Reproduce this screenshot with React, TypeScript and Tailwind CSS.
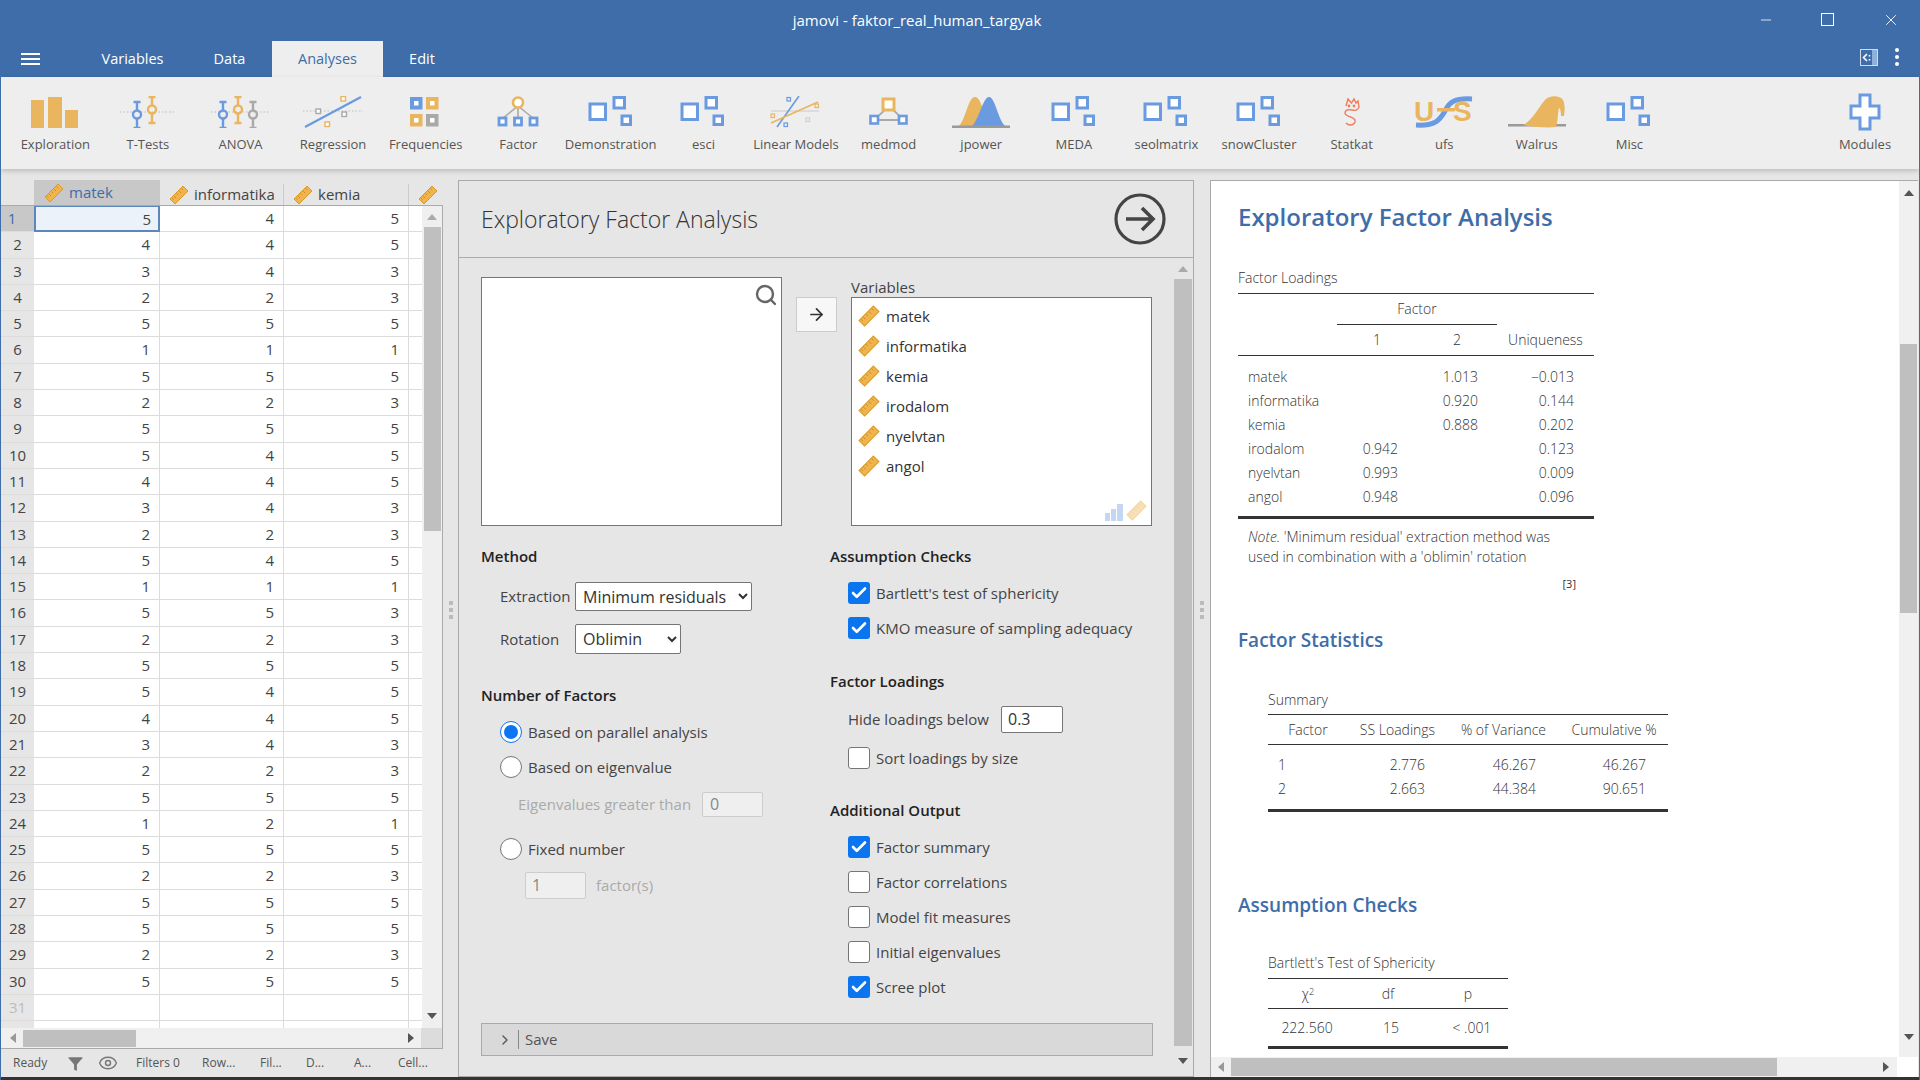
import React from "react";
import { Search, Check, ArrowRight, ChevronRight, Eye, Filter, Minus, X } from "lucide-react";

const BLUE = "#6a9ae0";
const ORANGE = "#e9b55f";
const GRAY = "#a9a9a9";

const rows = [
  [5, 4, 5], [4, 4, 5], [3, 4, 3], [2, 2, 3], [5, 5, 5], [1, 1, 1], [5, 5, 5], [2, 2, 3], [5, 5, 5], [5, 4, 5],
  [4, 4, 5], [3, 4, 3], [2, 2, 3], [5, 4, 5], [1, 1, 1], [5, 5, 3], [2, 2, 3], [5, 5, 5], [5, 4, 5], [4, 4, 5],
  [3, 4, 3], [2, 2, 3], [5, 5, 5], [1, 2, 1], [5, 5, 5], [2, 2, 3], [5, 5, 5], [5, 5, 5], [2, 2, 3], [5, 5, 5],
];

const Ruler = ({ size = 20, faded = false }: { size?: number; faded?: boolean }) => (
  <svg width={size} height={size} viewBox="0 0 20 20" className={faded ? "shrink-0 opacity-40" : "shrink-0"}>
    <polygon points="14,1 19,6 6,19 1,14" fill="#efb44c" stroke="#dc9a2a" strokeWidth="1" />
    <path d="M12.5 3.5l1.5 1.5M10 6l2 2M7.5 8.5l1.5 1.5M5 11l2 2M3 13l1.5 1.5" stroke="#c98a22" strokeWidth="0.9" />
  </svg>
);

// whisker mark used by T-Tests and ANOVA
const Whisker = ({ x, y, color }: { x: number; y: number; color: string }) => (
  <g stroke={color} strokeWidth="2.4" fill="none">
    <path d={`M${x - 3.5} ${y}h7M${x - 3.5} ${y + 26}h7M${x} ${y}v8M${x} ${y + 17}v9`} />
    <circle cx={x} cy={y + 12.5} r="4" />
  </g>
);

const Dots = ({ y, x1, x2 }: { y: number; x1: number; x2: number }) => (
  <path d={`M${x1} ${y}H${x2}`} stroke="#bdbdbd" strokeWidth="1" strokeDasharray="1.5 2" />
);

const Sq = ({ x, y, s, color, w = 2.6, fill = "#fff" }: { x: number; y: number; s: number; color: string; w?: number; fill?: string }) => (
  <rect x={x} y={y} width={s} height={s} fill={fill} stroke={color} strokeWidth={w} />
);

const ModuleIcon = () => (
  <svg width="46" height="32" viewBox="0 0 46 32">
    <Sq x={2} y={8} s={15.5} color={BLUE} w={3} />
    <Sq x={26} y={1.5} s={10.5} color={BLUE} w={3} />
    <Sq x={34} y={20} s={8.5} color={BLUE} w={3} />
  </svg>
);

const icons: Record<string, React.ReactNode> = {
  Exploration: (
    <svg width="48" height="32" viewBox="0 0 48 32">
      <rect x="0" y="4" width="13" height="28" fill={ORANGE} />
      <rect x="17" y="1" width="14" height="31" fill={ORANGE} />
      <rect x="34" y="14" width="13" height="18" fill={ORANGE} />
    </svg>
  ),
  "T-Tests": (
    <svg width="56" height="32" viewBox="0 0 56 32">
      <Dots y={16} x1={0} x2={56} />
      <Whisker x={17} y={6} color={BLUE} />
      <Whisker x={32} y={1} color={ORANGE} />
    </svg>
  ),
  ANOVA: (
    <svg width="58" height="32" viewBox="0 0 58 32">
      <Dots y={16} x1={0} x2={58} />
      <Whisker x={12} y={6} color={BLUE} />
      <Whisker x={27} y={1} color={ORANGE} />
      <Whisker x={42} y={6} color={GRAY} />
    </svg>
  ),
  Regression: (
    <svg width="60" height="32" viewBox="0 0 60 32">
      <Dots y={15} x1={0} x2={60} />
      <path d="M2 31L58 1" stroke={BLUE} strokeWidth="2.2" />
      <Sq x={38} y={0.5} s={4.5} color={ORANGE} w={1.4} />
      <Sq x={13} y={13} s={4.5} color={GRAY} w={1.4} />
      <Sq x={39} y={16} s={4.5} color={GRAY} w={1.4} />
      <Sq x={22} y={26} s={4.5} color={ORANGE} w={1.4} />
    </svg>
  ),
  Frequencies: (
    <svg width="32" height="32" viewBox="0 0 32 32">
      <Sq x={2} y={3} s={8.5} color={BLUE} w={4} />
      <Sq x={18} y={3} s={8.5} color={ORANGE} w={4} />
      <Sq x={2} y={20} s={8.5} color={ORANGE} w={4} />
      <Sq x={18} y={20} s={8.5} color={GRAY} w={4} />
    </svg>
  ),
  Factor: (
    <svg width="42" height="32" viewBox="0 0 42 32">
      <path d="M21 10L6 22M21 10V22M21 10L36 22" stroke={GRAY} strokeWidth="1.6" />
      <circle cx="21" cy="6.5" r="5" fill="#fff" stroke={ORANGE} strokeWidth="2.6" />
      <Sq x={2} y={22} s={7} color={BLUE} w={2.8} />
      <Sq x={17.5} y={22} s={7} color={BLUE} w={2.8} />
      <Sq x={33} y={22} s={7} color={BLUE} w={2.8} />
    </svg>
  ),
  "Linear Models": (
    <svg width="56" height="32" viewBox="0 0 56 32">
      <rect x="3" y="14" width="48" height="2" fill="#dcdcdc" />
      <Sq x={19} y={1.5} s={3.5} color={BLUE} w={1.2} fill="none" />
      <Sq x={38} y={22} s={3.5} color="#cfcfcf" w={1.2} fill="none" />
      <Sq x={3} y={18} s={3.5} color={ORANGE} w={1.2} fill="none" />
      <Sq x={16} y={27} s={3.5} color={BLUE} w={1.2} fill="none" />
      <Sq x={47} y={8} s={3.5} color={ORANGE} w={1.2} fill="none" />
      <path d="M9 31L31 0" stroke={BLUE} strokeWidth="1.6" />
      <path d="M3 27L50 6" stroke={ORANGE} strokeWidth="1.6" />
    </svg>
  ),
  medmod: (
    <svg width="42" height="32" viewBox="0 0 42 32">
      <path d="M21 10L6 24H36Z" fill="none" stroke={GRAY} strokeWidth="1.8" />
      <Sq x={15} y={3} s={11} color={ORANGE} w={3} />
      <Sq x={2.5} y={20} s={7.5} color={BLUE} w={2.6} />
      <Sq x={31} y={20} s={7.5} color={BLUE} w={2.6} />
    </svg>
  ),
  jpower: (
    <svg width="58" height="32" viewBox="0 0 58 32">
      <path d="M4 31C13 31 15 1 23 1C31 1 33 31 42 31Z" fill={ORANGE} />
      <path d="M17 31C26 31 30 1 37 1C44 1 47 31 56 31Z" fill={BLUE} />
      <rect x="0" y="29.5" width="58" height="2.5" fill="#9a9a9a" />
    </svg>
  ),
  Statkat: (
    <svg width="26" height="32" viewBox="0 0 26 32" fill="none" stroke="#ef7d5e" strokeWidth="1.4">
      <path d="M7 10L9 3l3.5 4L15 3l2 4 2-2 1 6c-1 3-4 4-7 3-4-1-7 0-7 3 0 4 8 3 10 7 1 3-2 5-5 5-2 0-3-1-4-2" />
      <circle cx="10" cy="10" r="0.7" fill="#ef7d5e" />
      <circle cx="15" cy="10" r="0.7" fill="#ef7d5e" />
    </svg>
  ),
  ufs: (
    <svg width="58" height="36" viewBox="0 0 58 36">
      <text x="-1" y="27" fontFamily="Liberation Sans, sans-serif" fontWeight="700" fontSize="28" fill={ORANGE}>U</text>
      <text x="38" y="27" fontFamily="Liberation Sans, sans-serif" fontWeight="700" fontSize="28" fill={ORANGE}>S</text>
      <path d="M1 31C18 32 24 28 30 17C34 8 40 4 57 5" stroke={BLUE} strokeWidth="5" fill="none" />
      <rect x="22" y="14" width="18" height="3.5" fill={ORANGE} />
    </svg>
  ),
  Walrus: (
    <svg width="58" height="32" viewBox="0 0 58 32">
      <rect x="0" y="28" width="58" height="2.5" fill="#9a9a9a" />
      <path d="M15 29C24 25 30 12 37 4C41 -1 52 -1 55 4C57 8 57 14 56 20L53 20C53 15 52 12 51 12C50 14 50 26 48 31C40 32 25 31 15 29Z" fill={ORANGE} />
    </svg>
  ),
  Modules: (
    <svg width="32" height="38" viewBox="0 0 32 38">
      <path d="M11 2H21V13H30V25H21V36H11V25H2V13H11Z" fill="#fff" stroke={BLUE} strokeWidth="3" />
    </svg>
  ),
};

const ribbon = [
  "Exploration", "T-Tests", "ANOVA", "Regression", "Frequencies", "Factor", "Demonstration:", "esci", "Linear Models",
  "medmod", "jpower", "MEDA", "seolmatrix", "snowCluster", "Statkat", "ufs", "Walrus", "Misc",
];

const RibbonItem = ({ label }: { label: string }) => (
  <div className="flex w-[92.6px] shrink-0 flex-col items-center">
    <div className="flex h-[32px] items-center justify-center">{icons[label] ?? <ModuleIcon />}</div>
    <div className="mt-[6px] h-[20px] w-[92px] overflow-hidden whitespace-nowrap text-center text-[13px] leading-[20px] text-[#555]">{label}</div>
  </div>
);

const Tri = ({ dir, color = "#555" }: { dir: "up" | "down" | "left" | "right"; color?: string }) => {
  const pts = { up: "0,7 5,1 10,7", down: "0,1 10,1 5,7", left: "7,0 7,10 1,5", right: "1,0 1,10 7,5" }[dir];
  return (
    <svg width={dir === "up" || dir === "down" ? 10 : 8} height={dir === "up" || dir === "down" ? 8 : 10} className="shrink-0">
      <polygon points={pts} fill={color} />
    </svg>
  );
};

const DataGrid = () => (
  <div className="flex w-[442px] flex-col bg-[#e6e6e6]">
    <div className="flex h-[25px] items-end text-[15px] text-[#444]">
      <div className="w-[33px]" />
      <div className="flex h-[25px] w-[126px] items-center gap-[5px] bg-[#c8c8c8] pl-[10px] text-[#3e6da9]"><Ruler />matek</div>
      <div className="flex h-[21px] w-[124px] items-center gap-[5px] border-r border-[#ccc] pl-[9px]"><Ruler />informatika</div>
      <div className="flex h-[21px] w-[125px] items-center gap-[5px] border-r border-[#ccc] pl-[9px]"><Ruler />kemia</div>
      <div className="flex h-[21px] items-center pl-[9px]"><Ruler /></div>
    </div>
    <div className="flex h-[823px] border-t border-r border-[#aaa]">
      <div className="w-[421px] overflow-hidden bg-white text-[15px] text-[#444]">
        {rows.map((r, i) => (
          <div key={i} className="flex h-[26.3px] border-b border-[#dcdcdc] leading-[25px]">
            <div className={i === 0 ? "w-[33px] bg-[#c8c8c8] pr-[11px] text-center text-[#3e6da9]" : "w-[33px] bg-[#e6e6e6] text-center"}>{i + 1}</div>
            {r.map((v, j) => (
              <div
                key={j}
                className={
                  i === 0 && j === 0
                    ? "-mt-px h-[27.3px] w-[126px] border-2 border-[#5d87bb] bg-[#ecf2fa] pr-[7px] text-right"
                    : "border-r border-[#dcdcdc] pr-[9px] text-right " + (j === 0 ? "w-[126px]" : j === 1 ? "w-[124px]" : "w-[125px]")
                }
              >
                {v}
              </div>
            ))}
          </div>
        ))}
        {[31, 32].map((n) => (
          <div key={n} className="flex h-[26.3px] border-b border-[#dcdcdc] leading-[25px]">
            <div className="w-[33px] bg-[#e6e6e6] text-center text-[#bbb]">{n}</div>
            <div className="w-[126px] border-r border-[#dcdcdc]" />
            <div className="w-[124px] border-r border-[#dcdcdc]" />
            <div className="w-[125px] border-r border-[#dcdcdc]" />
          </div>
        ))}
      </div>
      <div className="flex w-[20px] flex-col items-center bg-[#efefef]">
        <div className="flex h-[21px] items-center"><Tri dir="up" color="#aaa" /></div>
        <div className="h-[304px] w-[17px] bg-[#bfbfbf]" />
        <div className="flex-1" />
        <div className="flex h-[24px] items-center"><Tri dir="down" /></div>
      </div>
    </div>
    <div className="flex h-[21px] border-b border-r border-[#aaa]">
      <div className="flex h-[20px] w-[420px] items-center bg-[#f0f0f0] pl-[8px]">
        <Tri dir="left" color="#999" />
        <div className="ml-[6px] h-[17px] w-[113px] bg-[#bfbfbf]" />
        <div className="flex-1" />
        <div className="mr-[6px]"><Tri dir="right" /></div>
      </div>
      <div className="h-[20px] flex-1 bg-[#dcdcdc]" />
    </div>
    <div className="relative flex h-[28px] items-center text-[12px] text-[#555]">
      <span className="ml-[12px] w-[54px]">Ready</span>
      <Filter size={17} strokeWidth={0} fill="#777" className="w-[17px]" />
      <Eye size={20} strokeWidth={1.7} className="ml-[14px] text-[#777]" />
      <span className="ml-[18px] w-[66px]">Filters 0</span>
      <span className="w-[58px]">Row...</span>
      <span className="w-[46px]">Fil...</span>
      <span className="w-[48px]">D...</span>
      <span className="w-[44px]">A...</span>
      <span>Cell...</span>
    </div>
  </div>
);

const Splitter = ({ w }: { w: number }) => (
  <div className="flex shrink-0 flex-col items-center justify-center gap-[3px] pb-[38px]" style={{ width: w }}>
    <div className="h-[4px] w-[4px] bg-[#bbb]" />
    <div className="h-[4px] w-[4px] bg-[#bbb]" />
    <div className="h-[4px] w-[4px] bg-[#bbb]" />
  </div>
);

const Heading = ({ children, className = "" }: { children: React.ReactNode; className?: string }) => (
  <div className={"h-[24px] text-[15px] font-semibold leading-[24px] text-[#222] " + className}>{children}</div>
);

const CheckRow = ({ on = false, label, className = "" }: { on?: boolean; label: string; className?: string }) => (
  <div className={"ml-[18px] flex h-[22px] items-center text-[15px] text-[#444] " + className}>
    <span
      className={
        on
          ? "flex h-[22px] w-[22px] items-center justify-center rounded-[3px] bg-[#0b75f0]"
          : "h-[22px] w-[22px] rounded-[3px] border border-[#767676] bg-white"
      }
    >
      {on && <Check size={18} strokeWidth={3.5} className="text-white" />}
    </span>
    <span className="ml-[6px] whitespace-nowrap">{label}</span>
  </div>
);

const RadioRow = ({ on = false, label, className = "" }: { on?: boolean; label: string; className?: string }) => (
  <div className={"ml-[19px] flex h-[22px] items-center text-[15px] text-[#444] " + className}>
    <span className={"flex h-[22px] w-[22px] items-center justify-center rounded-full border bg-white " + (on ? "border-[#0b75f0]" : "border-[#767676]")}>
      {on && <span className="h-[14px] w-[14px] rounded-full bg-[#0b75f0]" />}
    </span>
    <span className="ml-[6px]">{label}</span>
  </div>
);

const Options = () => (
  <div className="flex w-[736px] flex-col border border-[#aaa] bg-[#e6e6e6]">
    <div className="flex h-[77px] shrink-0 items-center justify-between border-b border-[#aaa] pl-[22px] pr-[27px]">
      <span className="text-[23px] font-light text-[#333]">Exploratory Factor Analysis</span>
      <svg width="52" height="52" viewBox="0 0 52 52" fill="none" stroke="#444" strokeWidth="3.2">
        <circle cx="26" cy="26" r="24" />
        <path d="M12 26H39M28 15l11 11-11 11" strokeWidth="3.6" />
      </svg>
    </div>
    <div className="flex min-h-0 flex-1">
      <div className="w-[713px] pl-[22px] pt-[19px]">
        <div className="flex">
          <div className="relative h-[249px] w-[301px] border border-[#767676] bg-white">
            <Search size={24} strokeWidth={2.4} className="absolute right-[3px] top-[5px] text-[#666]" />
          </div>
          <button className="ml-[14px] mt-[20px] flex h-[35px] w-[41px] items-center justify-center border border-[#ccc] bg-[#f7f7f7]">
            <ArrowRight size={19} strokeWidth={2.2} className="text-[#333]" />
          </button>
          <div className="ml-[14px] flex w-[301px] flex-col">
            <div className="h-[20px] text-[15px] leading-[20px] text-[#444]">Variables</div>
            <div className="relative h-[229px] border border-[#767676] bg-white pl-[6px] pt-[3px] text-[15px] text-[#333]">
              {["matek", "informatika", "kemia", "irodalom", "nyelvtan", "angol"].map((v) => (
                <div key={v} className="flex h-[30px] items-center gap-[6px]"><Ruler size={22} />{v}</div>
              ))}
              <div className="absolute bottom-[4px] right-[4px] flex items-end gap-[3px]">
                <svg width="18" height="17" viewBox="0 0 18 17" className="opacity-40">
                  <path d="M0 9h5v8H0zM6 5h5v12H6zM12 0h6v17h-6z" fill={BLUE} />
                </svg>
                <Ruler size={21} faded />
              </div>
            </div>
          </div>
        </div>
        <div className="mt-[18px] flex">
          <div className="w-[349px]">
            <Heading>Method</Heading>
            <div className="ml-[19px] mt-[14px] flex h-[29px] items-center text-[15px] text-[#444]">
              <span className="w-[75px]">Extraction</span>
              <select defaultValue="a" className="h-[29px] w-[177px] rounded-[2px] border border-[#767676] bg-white pl-[3px] text-[16px] text-[#333]">
                <option value="a">Minimum residuals</option>
              </select>
            </div>
            <div className="ml-[19px] mt-[13px] flex h-[30px] items-center text-[15px] text-[#444]">
              <span className="w-[75px]">Rotation</span>
              <select defaultValue="a" className="h-[30px] w-[106px] rounded-[2px] border border-[#767676] bg-white pl-[3px] text-[16px] text-[#333]">
                <option value="a">Oblimin</option>
              </select>
            </div>
            <Heading className="mt-[29px]">Number of Factors</Heading>
            <RadioRow on label="Based on parallel analysis" className="mt-[14px]" />
            <RadioRow label="Based on eigenvalue" className="mt-[13px]" />
            <div className="ml-[37px] mt-[14px] flex h-[25px] items-center text-[15px] text-[#aaa]">
              <span className="w-[184px] whitespace-nowrap">Eigenvalues greater than</span>
              <div className="h-[25px] w-[61px] rounded-[2px] border border-[#ccc] bg-[#efefef] pl-[7px] text-[16px] leading-[23px] text-[#888]">0</div>
            </div>
            <RadioRow label="Fixed number" className="mt-[21px]" />
            <div className="ml-[44px] mt-[12px] flex h-[27px] items-center text-[15px] text-[#aaa]">
              <div className="h-[27px] w-[61px] rounded-[2px] border border-[#ccc] bg-[#efefef] pl-[6px] text-[16px] leading-[25px] text-[#888]">1</div>
              <span className="ml-[10px]">factor(s)</span>
            </div>
          </div>
          <div>
            <Heading>Assumption Checks</Heading>
            <CheckRow on label="Bartlett's test of sphericity" className="mt-[14px]" />
            <CheckRow on label="KMO measure of sampling adequacy" className="mt-[13px]" />
            <Heading className="mt-[30px]">Factor Loadings</Heading>
            <div className="ml-[18px] mt-[13px] flex h-[27px] items-center text-[15px] text-[#444]">
              <span className="w-[153px] whitespace-nowrap">Hide loadings below</span>
              <div className="h-[27px] w-[62px] rounded-[2px] border border-[#767676] bg-white pl-[6px] text-[16px] leading-[24px] text-[#333]">0.3</div>
            </div>
            <CheckRow label="Sort loadings by size" className="mt-[14px]" />
            <Heading className="mt-[29px]">Additional Output</Heading>
            <CheckRow on label="Factor summary" className="mt-[14px]" />
            <CheckRow label="Factor correlations" className="mt-[13px]" />
            <CheckRow label="Model fit measures" className="mt-[13px]" />
            <CheckRow label="Initial eigenvalues" className="mt-[13px]" />
            <CheckRow on label="Scree plot" className="mt-[13px]" />
          </div>
        </div>
        <div className="mt-[25px] flex h-[33px] w-[672px] items-center border border-[#aaa] bg-[#d9d9d9] text-[15px] text-[#555]">
          <ChevronRight size={16} strokeWidth={2} className="ml-[15px] text-[#555]" />
          <div className="ml-[5px] mr-[6px] h-[19px] w-px bg-[#888]" />
          Save
        </div>
      </div>
      <div className="flex w-[21px] flex-col items-center">
        <div className="flex h-[21px] items-center"><Tri dir="up" color="#aaa" /></div>
        <div className="h-[767px] w-[18px] bg-[#bfbfbf]" />
        <div className="flex flex-1 items-center"><Tri dir="down" /></div>
      </div>
    </div>
  </div>
);

const H2 = ({ children, className = "" }: { children: React.ReactNode; className?: string }) => (
  <div className={"h-[28px] text-[19px] font-semibold leading-[28px] text-[#3e6da9] " + className}>{children}</div>
);

const Caption = ({ children, className = "" }: { children: React.ReactNode; className?: string }) => (
  <div className={"h-[20px] text-[14px] font-light leading-[20px] text-[#333] " + className}>{children}</div>
);

const loadings = [
  ["matek", "", "1.013", "\u22120.013"],
  ["informatika", "", "0.920", "0.144"],
  ["kemia", "", "0.888", "0.202"],
  ["irodalom", "0.942", "", "0.123"],
  ["nyelvtan", "0.993", "", "0.009"],
  ["angol", "0.948", "", "0.096"],
];

const summary = [
  ["1", "2.776", "46.267", "46.267"],
  ["2", "2.663", "44.384", "90.651"],
];

const Results = () => (
  <div className="flex w-[708px] flex-col border-l border-t border-[#aaa] bg-white text-[#333]">
    <div className="flex min-h-0 flex-1">
      <div className="flex-1 overflow-hidden pl-[27px] pt-[20px] font-light">
        <div className="h-[32px] text-[24px] font-semibold leading-[32px] text-[#3e6da9]">Exploratory Factor Analysis</div>
        <Caption className="mt-[35px]">Factor Loadings</Caption>
        <div className="mt-[5px] w-[356px] border-t border-[#333] text-[14px]">
          <div className="flex h-[31px]">
            <div className="w-[99px]" />
            <div className="h-[31px] w-[160px] border-b border-[#333] text-center leading-[30px]">Factor</div>
          </div>
          <div className="flex h-[31px] border-b border-[#333] leading-[30px]">
            <div className="w-[99px]" />
            <div className="w-[80px] text-center">1</div>
            <div className="w-[80px] text-center">2</div>
            <div className="w-[97px] text-center">Uniqueness</div>
          </div>
          <div className="border-b-[3px] border-[#333] pb-[7px] pt-[9px]">
            {loadings.map((r) => (
              <div key={r[0]} className="flex h-[24px] leading-[24px]">
                <div className="w-[99px] pl-[10px]">{r[0]}</div>
                <div className="w-[80px] pr-[19px] text-right">{r[1]}</div>
                <div className="w-[80px] pr-[19px] text-right">{r[2]}</div>
                <div className="w-[97px] pr-[20px] text-right">{r[3]}</div>
              </div>
            ))}
          </div>
          <div className="mt-[8px] pl-[10px] text-[14px] leading-[20px]">
            <div className="whitespace-nowrap"><i>Note.</i> 'Minimum residual' extraction method was</div>
            <div className="whitespace-nowrap">used in combination with a 'oblimin' rotation</div>
          </div>
          <div className="mt-[9px] h-[16px] pr-[18px] text-right text-[11px] font-normal leading-[16px]">[3]</div>
        </div>
        <H2 className="mt-[34px]">Factor Statistics</H2>
        <Caption className="ml-[30px] mt-[36px]">Summary</Caption>
        <div className="ml-[30px] mt-[4px] w-[400px] border-t border-[#333] text-[14px]">
          <div className="flex h-[30px] border-b border-[#333] text-center leading-[30px]">
            <div className="w-[80px]">Factor</div>
            <div className="w-[99px]">SS Loadings</div>
            <div className="w-[113px]">% of Variance</div>
            <div className="w-[108px]">Cumulative %</div>
          </div>
          <div className="border-b-[3px] border-[#333] pb-[8px] pt-[8px]">
            {summary.map((r) => (
              <div key={r[0]} className="flex h-[24px] leading-[24px]">
                <div className="w-[80px] pl-[10px]">{r[0]}</div>
                <div className="w-[77px] text-right">{r[1]}</div>
                <div className="w-[111px] text-right">{r[2]}</div>
                <div className="w-[110px] text-right">{r[3]}</div>
              </div>
            ))}
          </div>
        </div>
        <H2 className="mt-[79px]">Assumption Checks</H2>
        <Caption className="ml-[30px] mt-[34px]">Bartlett's Test of Sphericity</Caption>
        <div className="ml-[30px] mt-[5px] w-[240px] border-t border-[#333] text-[14px]">
          <div className="flex h-[30px] border-b border-[#333] text-center leading-[30px]">
            <div className="w-[80px]">χ<sup className="text-[9px]">2</sup></div>
            <div className="w-[80px]">df</div>
            <div className="w-[80px]">p</div>
          </div>
          <div className="flex h-[40px] items-center border-b-[3px] border-[#333] text-center">
            <div className="w-[80px]">222.560</div>
            <div className="w-[92px]">15</div>
            <div className="w-[74px]">&lt; .001</div>
          </div>
        </div>
      </div>
      <div className="flex w-[19px] flex-col items-center bg-[#f0f0f0]">
        <div className="flex h-[23px] items-center"><Tri dir="up" /></div>
        <div className="mt-[140px] h-[269px] w-[17px] bg-[#bfbfbf]" />
        <div className="mt-[420px]"><Tri dir="down" /></div>
      </div>
    </div>
    <div className="flex h-[20px] w-[686px] items-center bg-[#f0f0f0] pl-[6px]">
      <Tri dir="left" color="#999" />
      <div className="ml-[6px] h-[18px] w-[546px] bg-[#bfbfbf]" />
      <div className="ml-[105px]"><Tri dir="right" /></div>
    </div>
  </div>
);

export default function App() {
  return (
    <div className="flex h-[1080px] w-[1920px] flex-col overflow-hidden border-x border-[#3e6da9] bg-[#e6e6e6] font-['Open_Sans','Noto_Sans',sans-serif]">
      <header className="h-[77px] shrink-0 bg-[#3e6da9] text-white">
        <div className="flex h-[41px]">
          <div className="w-[1750px] pl-[82px] pt-[9px] text-center text-[15px]">jamovi - faktor_real_human_targyak</div>
          <div className="flex h-[41px] items-center pb-[2px]">
            <Minus size={16} strokeWidth={1.2} className="ml-[7px]" />
            <div className="ml-[47px] h-[13px] w-[13px] border border-white" />
            <X size={18} strokeWidth={1.2} className="ml-[48px]" />
          </div>
        </div>
        <div className="flex h-[36px] items-center text-[14.5px]">
          <div className="flex w-[77px] flex-col items-center gap-[3px] pr-[18px]">
            <div className="h-[2px] w-[19px] bg-white" />
            <div className="h-[2px] w-[19px] bg-white" />
            <div className="h-[2px] w-[19px] bg-white" />
          </div>
          <div className="w-[109px] text-center">Variables</div>
          <div className="w-[85px] text-center">Data</div>
          <div className="flex h-[36px] w-[111px] items-center justify-center bg-[#eeeeee] text-[#3e6da9]">Analyses</div>
          <div className="w-[78px] text-center">Edit</div>
          <div className="flex-1" />
          <svg width="18" height="17" viewBox="0 0 18 17" className="mb-[4px]">
            <rect x="0.5" y="0.5" width="17" height="16" fill="none" stroke="#cfdcee" />
            <rect x="12" y="1" width="5" height="15" fill="#8fb0d8" />
            <path d="M7 5L3.5 8.5L7 12" fill="none" stroke="#fff" strokeWidth="1.6" />
            <path d="M9.5 6v1.5M9.5 10v1.5" stroke="#fff" strokeWidth="1.6" />
          </svg>
          <div className="ml-[17px] mr-[20px] mb-[4px] flex flex-col gap-[3px]">
            <div className="h-[4px] w-[4px] rounded-full bg-white" />
            <div className="h-[4px] w-[4px] rounded-full bg-white" />
            <div className="h-[4px] w-[4px] rounded-full bg-white" />
          </div>
        </div>
      </header>
      <div className="relative z-10 flex h-[92px] shrink-0 bg-[#eeeeee] pl-[8px] pt-[19px] shadow-[0_2px_5px_rgba(0,0,0,0.18)]">
        {ribbon.map((r) => (
          <RibbonItem key={r} label={r} />
        ))}
        <div className="flex-1" />
        <div className="mr-[8px] flex w-[92px] flex-col items-center">
          <div className="flex h-[32px] items-center">{icons.Modules}</div>
          <div className="mt-[6px] h-[20px] text-[13px] leading-[20px] text-[#555]">Modules</div>
        </div>
      </div>
      <main className="flex min-h-0 flex-1 pt-[11px]">
        <DataGrid />
        <Splitter w={15} />
        <Options />
        <Splitter w={16} />
        <Results />
      </main>
      <div className="h-[3px] shrink-0 bg-[#333]" />
    </div>
  );
}
